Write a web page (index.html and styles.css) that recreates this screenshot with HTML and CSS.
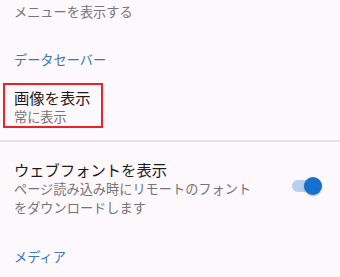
FILE: index.html
```html
<!DOCTYPE html>
<html lang="ja">
<head>
  <meta charset="UTF-8" />
  <meta name="viewport" content="width=device-width, initial-scale=1.0"/>
  <title>設定</title>
  <link rel="stylesheet" href="styles.css">
</head>
<body>
  <div class="lista">
    <div class="resumo topo">メニューを表示する</div>

    <div class="categoria cat1">データセーバー</div>

    <div class="item destaque">
      <div class="titulo">画像を表示</div>
      <div class="resumo">常に表示</div>
    </div>

    <div class="divisor"></div>

    <div class="item linha">
      <div class="textos">
        <div class="titulo">ウェブフォントを表示</div>
        <div class="resumo">ページ読み込み時にリモートのフォントをダウンロードします</div>
      </div>
      <div class="chave ligada">
        <div class="trilho"></div>
        <div class="bolinha"></div>
      </div>
    </div>

    <div class="categoria cat2">メディア</div>
  </div>
</body>
</html>
```

FILE: styles.css
```css
body {
  margin: 0;
  font-family: "Noto Sans CJK JP", "Noto Sans", sans-serif;
  background: #fcf8fc;
  color: #1e1b1e;
  overflow: hidden;
}
.lista {
  display: flex;
  flex-direction: column;
}
.titulo {
  font-size: 15.3px;
  line-height: 20px;
  color: #1e1b1e;
}
.resumo {
  font-size: 13.2px;
  line-height: 19px;
  color: #787478;
}
.topo {
  padding: 2px 14px 0;
}
.categoria {
  font-size: 13.2px;
  line-height: 19px;
  color: #3a78b8;
  padding-left: 14px;
}
.cat1 {
  padding-top: 29px;
}
.cat2 {
  padding-top: 30px;
}
.destaque {
  margin: 14px 0 0 3px;
  width: 100px;
  box-sizing: border-box;
  border: 2px solid #e8232a;
  padding: 2px 0 0 9px;
  height: 45px;
}
.divisor {
  margin-top: 12px;
  height: 2px;
  background: #e6e0e6;
}
.linha {
  display: flex;
  align-items: center;
  padding: 17px 0 0 14px;
}
.textos {
  width: 245px;
}
.chave {
  position: relative;
  margin: 0 0 5px 33px;
  width: 30px;
  height: 18px;
}
.trilho {
  position: absolute;
  left: 0;
  top: 3px;
  width: 28px;
  height: 12px;
  border-radius: 6px;
  background: #b9cfee;
}
.bolinha {
  position: absolute;
  left: 12px;
  top: 0;
  width: 18px;
  height: 18px;
  border-radius: 50%;
  background: #1570d0;
  box-shadow: 0 1px 2px rgba(0, 0, 0, 0.25);
}
```
